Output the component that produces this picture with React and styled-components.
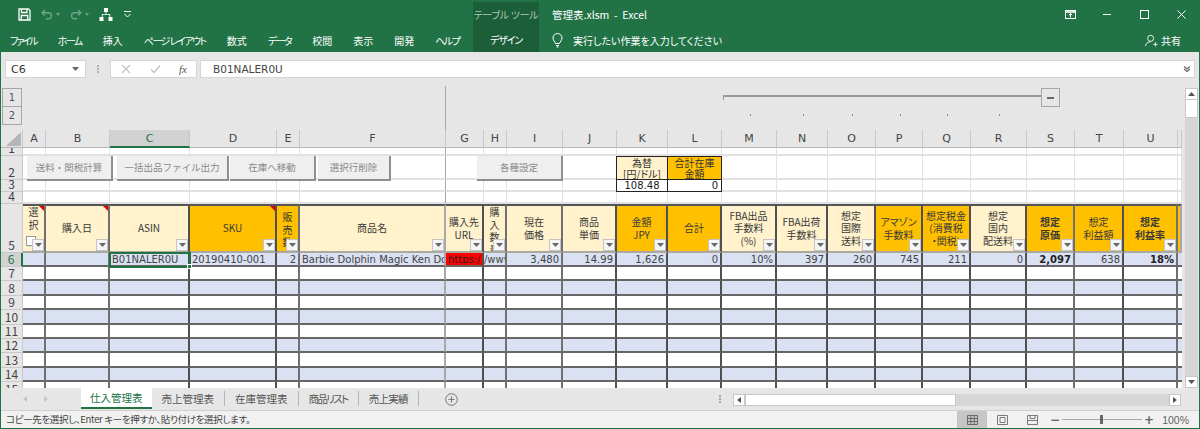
import React from 'react';
import styled, {createGlobalStyle} from 'styled-components';

const green = '#217346';
const jp = `"Noto Sans CJK JP", "Noto Sans", sans-serif`;
const cellFont = `"DejaVu Sans", "Noto Sans CJK JP", sans-serif`;
const cream = '#fff2cc';
const orange = '#ffc000';
const blue = '#d9e1f2';
const lineDark = '#505050';
const lineMid = '#707070';
const lineGrey = '#a8a8a8';
const lineLight = '#e1e1e1';

const columns = [
  {id: 'A', w: 23, line: lineMid},
  {id: 'B', w: 64, line: lineMid},
  {id: 'C', w: 80, line: lineDark},
  {id: 'D', w: 87, line: lineDark},
  {id: 'E', w: 23, line: lineMid},
  {id: 'F', w: 146, line: lineGrey},
  {id: 'G', w: 38, line: lineDark},
  {id: 'H', w: 23, line: lineMid},
  {id: 'I', w: 56, line: lineMid},
  {id: 'J', w: 54, line: lineDark},
  {id: 'K', w: 51, line: lineDark},
  {id: 'L', w: 54, line: lineDark},
  {id: 'M', w: 55, line: lineDark},
  {id: 'N', w: 51, line: lineDark},
  {id: 'O', w: 48, line: lineDark},
  {id: 'P', w: 47, line: lineDark},
  {id: 'Q', w: 48, line: lineDark},
  {id: 'R', w: 56, line: lineDark},
  {id: 'S', w: 48, line: lineMid},
  {id: 'T', w: 49, line: lineDark},
  {id: 'U', w: 54, line: lineMid},
  {id: 'V', w: 4, line: lineGrey}
];

const template = `22px ${columns.map(c => c.w + 'px').join(' ')}`;

const headers = {
  A: {lines: ['選', '択'], top: true, checkbox: true, note: true},
  B: {lines: ['購入日'], note: true},
  C: {lines: ['ASIN']},
  D: {lines: ['SKU'], orange: true, note: true},
  E: {lines: ['販', '売', '数'], orange: true, top: true, pad: 5},
  F: {lines: ['商品名']},
  G: {lines: ['購入先', 'URL']},
  H: {lines: ['購', '入', '数', '量'], top: true},
  I: {lines: ['現在', '価格']},
  J: {lines: ['商品', '単価']},
  K: {lines: ['金額', 'JPY'], orange: true},
  L: {lines: ['合計'], orange: true},
  M: {lines: ['FBA出品', '手数料', '(%)']},
  N: {lines: ['FBA出荷', '手数料']},
  O: {lines: ['想定', '国際', '送料']},
  P: {lines: ['アマゾン', '手数料'], orange: true},
  Q: {lines: ['想定税金', '(消費税', '・関税)'], orange: true},
  R: {lines: ['想定', '国内', '配送料']},
  S: {lines: ['想定', '原価'], orange: true, bold: true},
  T: {lines: ['想定', '利益額'], orange: true},
  U: {lines: ['想定', '利益率'], orange: true, bold: true},
  V: {lines: [], orange: true, noFilter: true}
};

const rowSix = {
  C: {text: 'B01NALER0U'},
  D: {text: '20190410-001'},
  E: {text: '2', right: true},
  F: {text: 'Barbie Dolphin Magic Ken Do'},
  G: {text: 'https:/', red: true},
  H: {text: '/www', flush: true},
  I: {text: '3,480', right: true},
  J: {text: '14.99', right: true},
  K: {text: '1,626', right: true},
  L: {text: '0', right: true},
  M: {text: '10%', right: true},
  N: {text: '397', right: true},
  O: {text: '260', right: true},
  P: {text: '745', right: true},
  Q: {text: '211', right: true},
  R: {text: '0', right: true},
  S: {text: '2,097', right: true, bold: true},
  T: {text: '638', right: true},
  U: {text: '18%', right: true, bold: true}
};

const menuItems = [
  {label: 'ファイル', spacing: -2},
  {label: 'ホーム', spacing: -1.5},
  {label: '挿入', spacing: 0},
  {label: 'ページ レイアウト', spacing: -1.5},
  {label: '数式', spacing: 0},
  {label: 'データ', spacing: -1.5},
  {label: '校閲', spacing: 0},
  {label: '表示', spacing: 0},
  {label: '開発', spacing: 0},
  {label: 'ヘルプ', spacing: -1.5}
];
const sheetTabs = [
  {label: '仕入管理表', spacing: 0},
  {label: '売上管理表', spacing: 0},
  {label: '在庫管理表', spacing: 0},
  {label: '商品リスト', spacing: -1.6},
  {label: '売上実績', spacing: -0.7}
];
const floatButtons = [
  {label: '送料・関税計算', left: 26, width: 86},
  {label: '一括出品ファイル出力', left: 116, width: 112},
  {label: '在庫へ移動', left: 229, width: 86},
  {label: '選択行削除', left: 317, width: 73},
  {label: '各種設定', left: 476, width: 86}
];
const outlineDots = ['M', 'N', 'O', 'P', 'Q', 'R'];

const FilterArrow = () => (
  <FilterBtn>
    <svg width="7" height="4" viewBox="0 0 7 4"><path d="M0 0h7L3.500 4z" fill="#666" /></svg>
  </FilterBtn>
);

// rows 1-4 are blank apart from the exchange rate block in K2:L3
const topCell = (row, col) => {
  if (row === 2 && col.id === 'K') return <RateCell key={col.id} $bg={cream}>為替<br />[円/ドル]</RateCell>;
  if (row === 2 && col.id === 'L') return <RateCell key={col.id} $bg={orange}>合計在庫<br />金額</RateCell>;
  if (row === 3 && col.id === 'K') return <RateValue key={col.id}>108.48</RateValue>;
  if (row === 3 && col.id === 'L') return <RateValue key={col.id} $right>0</RateValue>;
  return <BlankCell key={col.id} $freeze={col.id === 'F'} />;
};

export default function App() {
  return (
    <>
      <GlobalStyle />
      <Frame>
        <TitleBar>
          <TitleRow>
            <QuickAccess>
              <svg width="13" height="13" viewBox="0 0 13 13" fill="none" stroke="#fff" strokeWidth="1.300">
                <path d="M1 1h9.500L12 2.500V12H1z" />
                <path d="M3.500 1v3.500h5.500V1M3.300 12V7.500h6.400V12" />
              </svg>
              <Dim>
                <svg width="12" height="11" viewBox="0 0 12 11" fill="none" stroke="#fff" strokeWidth="1.400">
                  <path d="M3.800 1L1.200 3.800l2.600 2.700M1.500 3.800H7.500a3 3 0 0 1 0 6H5" />
                </svg>
                <Caret />
              </Dim>
              <Dim>
                <svg width="12" height="11" viewBox="0 0 12 11" fill="none" stroke="#fff" strokeWidth="1.400">
                  <path d="M8.200 1l2.600 2.800-2.600 2.700M10.500 3.800H4.500a3 3 0 0 0 0 6H7" />
                </svg>
                <Caret />
              </Dim>
              <svg width="14" height="13" viewBox="0 0 14 13" fill="#fff">
                <rect x="5" y="0" width="4" height="4" />
                <rect x="0.500" y="9" width="4" height="4" />
                <rect x="9.500" y="9" width="4" height="4" />
                <path d="M6.600 4h.8v2h3.800v3h-.8V6.800H3.600V9h-.8V6h3.800z" />
              </svg>
              <svg width="9" height="7" viewBox="0 0 9 7" fill="none" stroke="#fff">
                <path d="M1 .5h7" />
                <path d="M1.500 3l3 3 3-3" />
              </svg>
            </QuickAccess>
            <ToolGroupLabel>テーブル ツール</ToolGroupLabel>
            <DocTitle>管理表.xlsm&nbsp; -&nbsp; Excel</DocTitle>
            <WindowButtons>
              <svg width="11" height="9" viewBox="0 0 11 9" fill="none" stroke="#fff">
                <rect x=".5" y=".5" width="10" height="8" />
                <path d="M.5 2h10" strokeWidth="1.600" />
                <path d="M5.500 7.500V3.500M3.800 5.200l1.700-1.700 1.700 1.700" />
              </svg>
              <svg width="11" height="11" viewBox="0 0 11 11" stroke="#fff"><path d="M1 5.500h8" /></svg>
              <svg width="11" height="11" viewBox="0 0 11 11" fill="none" stroke="#fff"><rect x="1.500" y="1.500" width="8" height="8" /></svg>
              <svg width="11" height="11" viewBox="0 0 11 11" fill="none" stroke="#fff"><path d="M1.500 1.500l8 8M9.500 1.500l-8 8" /></svg>
            </WindowButtons>
          </TitleRow>
          <MenuRow>
            <Menu>
              {menuItems.map(item => <MenuItem key={item.label} $spacing={item.spacing}>{item.label}</MenuItem>)}
            </Menu>
            <DesignTab>デザイン</DesignTab>
            <TellMe>
              <svg width="11" height="15" viewBox="0 0 11 15" fill="none" stroke="#fff">
                <path d="M3.500 10.500C3 8.500 1 7.500 1 5a4.500 4.500 0 0 1 9 0c0 2.500-2 3.500-2.500 5.500zM4 12.500h3M4.500 14h2" />
              </svg>
              <span>実行したい作業を入力してください</span>
            </TellMe>
            <Share>
              <svg width="13" height="13" viewBox="0 0 15 14" fill="none" stroke="#fff">
                <circle cx="6.500" cy="4.500" r="3.500" />
                <path d="M.5 13.500c.5-3 2.500-5 6-5M9.500 11.500h5M12 9v5" />
              </svg>
              <span>共有</span>
            </Share>
          </MenuRow>
        </TitleBar>

        <FormulaBar>
          <NameBox>
            C6
            <svg width="7" height="4" viewBox="0 0 7 4"><path d="M0 0h7L3.500 4z" fill="#666" /></svg>
          </NameBox>
          <GripDots />
          <FormulaButtons>
            <svg width="10" height="10" viewBox="0 0 10 10" fill="none" stroke="#c4c4c4" strokeWidth="1.300"><path d="M1 1l8 8M9 1l-8 8" /></svg>
            <svg width="11" height="10" viewBox="0 0 11 10" fill="none" stroke="#c4c4c4" strokeWidth="1.500"><path d="M1 5.500l3 3 6-7" /></svg>
            <FxLabel>fx</FxLabel>
          </FormulaButtons>
          <FormulaInput>
            <span>B01NALER0U</span>
            <svg width="8" height="6" viewBox="0 0 8 6" fill="none" stroke="#666" strokeWidth="1.200"><path d="M1 .5l3 2.500 3-2.500M1 3l3 2.500L7 3" /></svg>
          </FormulaInput>
        </FormulaBar>

        <Workspace>
          <Sheet>
            <OutlineRow>
              <LevelButtons>
                <LevelBtn>1</LevelBtn>
                <LevelBtn>2</LevelBtn>
              </LevelButtons>
              {columns.map(col => (
                <OutlineCell key={col.id} $freeze={col.id === 'F'}>
                  {outlineDots.includes(col.id) && <OutlineDot />}
                </OutlineCell>
              ))}
              <OutlineBracket>
                <OutlineToggle />
              </OutlineBracket>
            </OutlineRow>

            <Grid $h={18}>
              <Corner>
                <svg width="15" height="14" viewBox="0 0 15 14"><path d="M15 0v14H0z" fill="#b5b5b5" /></svg>
              </Corner>
              {columns.map(col => (
                <ColHead key={col.id} $active={col.id === 'C'}>{col.w > 10 ? col.id : ''}</ColHead>
              ))}
            </Grid>

            <Body>
              {[[1, 8], [2, 24], [3, 12], [4, 12]].map(([row, h]) => (
                <Grid key={row} $h={h}>
                  <RowHead>{row}</RowHead>
                  {columns.map(col => topCell(row, col))}
                </Grid>
              ))}

              <Grid $h={49}>
                <RowHead>5</RowHead>
                {columns.map(col => {
                  const head = headers[col.id];
                  return (
                    <HeadCell key={col.id} $orange={head.orange} $line={col.line} $top={head.top}>
                      {head.note && <NoteMark />}
                      <HeadText $bold={head.bold} $pad={head.pad}>
                        {head.lines.map(line => <div key={line}>{line}</div>)}
                      </HeadText>
                      {head.checkbox && <CheckBox />}
                      {!head.noFilter && <FilterArrow />}
                    </HeadCell>
                  );
                })}
              </Grid>

              {[6, 7, 8, 9, 10, 11, 12, 13, 14, 15].map(row => (
                <Grid key={row} $h={row === 6 ? 14 : 14.4}>
                  <RowHead $active={row === 6}>{row}</RowHead>
                  {columns.map(col => {
                    const data = row === 6 ? rowSix[col.id] : null;
                    return (
                      <DataCell
                        key={col.id}
                        $line={col.line}
                        $striped={row % 2 === 0}
                        $red={data && data.red}
                        $right={data && data.right}
                        $bold={data && data.bold}
                        $flush={data && data.flush}
                      >
                        {data && data.text}
                      </DataCell>
                    );
                  })}
                </Grid>
              ))}

              <Selection />

              {floatButtons.map(btn => (
                <FloatButton key={btn.label} $left={btn.left} $width={btn.width}>{btn.label}</FloatButton>
              ))}
            </Body>
          </Sheet>

          <VScroll>
            <ScrollBtn>
              <svg width="7" height="4" viewBox="0 0 7 4"><path d="M3.500 0L7 4H0z" fill="#555" /></svg>
            </ScrollBtn>
            <ScrollThumb />
            <ScrollTrack />
            <ScrollBtn>
              <svg width="7" height="4" viewBox="0 0 7 4"><path d="M0 0h7L3.500 4z" fill="#555" /></svg>
            </ScrollBtn>
          </VScroll>
        </Workspace>

        <TabBar>
          <TabNav>
            <svg width="4" height="6" viewBox="0 0 4 6"><path d="M4 0v6L0 3z" fill="#c4c4c4" /></svg>
            <svg width="4" height="6" viewBox="0 0 4 6"><path d="M0 0v6l4-3z" fill="#c4c4c4" /></svg>
          </TabNav>
          <Tabs>
            {sheetTabs.map((tab, i) => (
              <SheetTab key={tab.label} $active={i === 0} $spacing={tab.spacing}>{tab.label}</SheetTab>
            ))}
          </Tabs>
          <AddSheet>
            <svg width="13" height="13" viewBox="0 0 13 13" fill="none" stroke="#777">
              <circle cx="6.500" cy="6.500" r="5.800" />
              <path d="M6.500 3.500v6M3.500 6.500h6" />
            </svg>
          </AddSheet>
          <TabGrip />
          <HScroll>
            <HScrollBtn>
              <svg width="4" height="6" viewBox="0 0 4 6"><path d="M4 0v6L0 3z" fill="#555" /></svg>
            </HScrollBtn>
            <HScrollThumb />
            <HScrollTrack />
            <HScrollBtn>
              <svg width="4" height="6" viewBox="0 0 4 6"><path d="M0 0v6l4-3z" fill="#555" /></svg>
            </HScrollBtn>
          </HScroll>
        </TabBar>

        <StatusBar>
          <StatusText>コピー先を選択し、Enter キーを押すか、貼り付けを選択します。</StatusText>
          <ViewButton $active>
            <svg width="11" height="10" viewBox="0 0 11 10" fill="none" stroke="#6a6a6a">
              <path d="M.5.500h10v9H.5zM.5 3.500h10M.5 6.500h10M3.800.500v9M7.200.500v9" />
            </svg>
          </ViewButton>
          <ViewButton>
            <svg width="11" height="10" viewBox="0 0 11 10" fill="none" stroke="#7a7a7a">
              <path d="M.5.500h10v9H.5zM3 2.500h5v5H3z" />
            </svg>
          </ViewButton>
          <ViewButton>
            <svg width="11" height="10" viewBox="0 0 11 10" fill="none" stroke="#7a7a7a">
              <path d="M.5.500h10v9H.5zM.5 5.500h10M3 .500v3h5v-3" />
            </svg>
          </ViewButton>
          <ZoomControl>
            <ZoomSign>−</ZoomSign>
            <ZoomSlider><ZoomThumb /></ZoomSlider>
            <ZoomSign>+</ZoomSign>
            <ZoomValue>100%</ZoomValue>
          </ZoomControl>
        </StatusBar>
      </Frame>
    </>
  );
}

const GlobalStyle = createGlobalStyle`
  html, body {
    margin: 0;
    padding: 0;
    background: #e6e6e6;
  }
`;

const Frame = styled.div`
  box-sizing: border-box;
  width: 1200px;
  height: 429px;
  display: flex;
  flex-direction: column;
  overflow: hidden;
  border-left: 1px solid ${green};
  border-right: 1px solid ${green};
  border-bottom: 1px solid ${green};
  font-family: ${jp};
  background: #e6e6e6;
`;

const TitleBar = styled.div`
  height: 52px;
  flex: none;
  background: ${green};
  color: #fff;
  font-size: 10px;
`;

const TitleRow = styled.div`
  height: 28px;
  display: flex;
  align-items: center;
`;

const QuickAccess = styled.div`
  display: flex;
  align-items: center;
  width: 472px;
  box-sizing: border-box;
  padding-left: 17px;
  gap: 10px;
`;

const Dim = styled.div`
  display: flex;
  align-items: center;
  gap: 3px;
  opacity: 0.35;
`;

const Caret = styled.span`
  border-top: 3px solid #fff;
  border-left: 2px solid transparent;
  border-right: 2px solid transparent;
`;

const ToolGroupLabel = styled.div`
  width: 66px;
  height: 26px;
  margin-top: 2px;
  background: #1c5e38;
  color: #a9c9b6;
  font-size: 10px;
  letter-spacing: -0.3px;
  line-height: 26px;
  text-align: center;
  white-space: nowrap;
  font-feature-settings: "palt";
`;

const DocTitle = styled.div`
  margin-left: 13px;
  font-size: 10.500px;
  white-space: nowrap;
`;

const WindowButtons = styled.div`
  margin-left: auto;
  margin-right: 12px;
  display: flex;
  align-items: center;
  gap: 26px;
`;

const MenuRow = styled.div`
  height: 24px;
  display: flex;
  align-items: center;
`;

const Menu = styled.div`
  width: 472px;
  box-sizing: border-box;
  padding-left: 9px;
  display: flex;
  gap: 21px;
  font-feature-settings: "palt";
`;

const MenuItem = styled.div`
  white-space: nowrap;
  font-size: 10px;
  letter-spacing: ${({$spacing}) => $spacing}px;
`;

const DesignTab = styled.div`
  width: 66px;
  height: 24px;
  line-height: 24px;
  text-align: center;
  background: #1c5e38;
  font-size: 10px;
  letter-spacing: -1.200px;
  font-feature-settings: "palt";
`;

const TellMe = styled.div`
  margin-left: 13px;
  display: flex;
  align-items: center;
  gap: 10px;
  font-size: 10px;
  font-feature-settings: "palt";
`;

const Share = styled.div`
  margin-left: auto;
  margin-right: 18px;
  display: flex;
  align-items: center;
  gap: 3px;
  font-size: 10px;
`;

const FormulaBar = styled.div`
  height: 34px;
  flex: none;
  box-sizing: border-box;
  padding: 8px 4px 8px 4px;
  display: flex;
  align-items: stretch;
  background: #e6e6e6;
`;

const NameBox = styled.div`
  width: 81px;
  box-sizing: border-box;
  background: #fff;
  border: 1px solid #d6d6d6;
  padding: 0 6px 0 5px;
  display: flex;
  align-items: center;
  justify-content: space-between;
  font: 11px ${cellFont};
  color: #333;
`;

const GripDots = styled.div`
  width: 24px;
  position: relative;
  &::after {
    content: '';
    position: absolute;
    left: 11px;
    top: 5px;
    width: 2px;
    height: 8px;
    background: repeating-linear-gradient(#b0b0b0 0 2px, transparent 2px 3px);
  }
`;

const FormulaButtons = styled.div`
  width: 87px;
  box-sizing: border-box;
  background: #fff;
  border: 1px solid #d6d6d6;
  padding: 0 9px 0 10px;
  display: flex;
  align-items: center;
  justify-content: space-between;
  margin-right: 3px;
`;

const FxLabel = styled.span`
  font: italic 11px "Liberation Serif", serif;
  color: #555;
`;

const FormulaInput = styled.div`
  flex: 1;
  box-sizing: border-box;
  background: #fff;
  border: 1px solid #d6d6d6;
  padding: 0 3px 0 12px;
  display: flex;
  align-items: center;
  justify-content: space-between;
  font: 10.500px ${cellFont};
  color: #444;
`;

const Workspace = styled.div`
  height: 302px;
  flex: none;
  display: flex;
`;

const Sheet = styled.div`
  width: 1181px;
  flex: none;
`;

const OutlineRow = styled.div`
  position: relative;
  height: 44px;
  display: grid;
  grid-template-columns: ${template};
`;

const LevelButtons = styled.div`
  padding: 2px 0 0 1px;
`;

const LevelBtn = styled.div`
  box-sizing: border-box;
  width: 20px;
  height: 19px;
  border: 1px solid #a6a6a6;
  margin-bottom: -1px;
  font: 10px ${cellFont};
  color: #555;
  display: flex;
  align-items: center;
  justify-content: center;
`;

const OutlineCell = styled.div`
  position: relative;
  ${({$freeze}) => $freeze && 'border-right: 1px solid #a8a8a8;'}
`;

const OutlineDot = styled.span`
  position: absolute;
  left: 50%;
  top: 28px;
  width: 1px;
  height: 2px;
  background: #8e8e8e;
`;

const OutlineBracket = styled.div`
  position: absolute;
  left: 722px;
  top: 9px;
  width: 318px;
  height: 5px;
  box-sizing: border-box;
  border-top: 2px solid #9a9a9a;
  border-left: 1px solid #9a9a9a;
`;

const OutlineToggle = styled.div`
  position: absolute;
  left: 317px;
  top: -9px;
  width: 19px;
  height: 19px;
  box-sizing: border-box;
  background: #e6e6e6;
  border: 1px solid #a6a6a6;
  &::after {
    content: '';
    position: absolute;
    left: 5px;
    top: 8px;
    width: 7px;
    height: 2px;
    background: #666;
  }
`;

const Grid = styled.div`
  height: ${({$h}) => $h}px;
  display: grid;
  grid-template-columns: ${template};
  grid-template-rows: ${({$h}) => $h}px;
`;

const Corner = styled.div`
  background: #e6e6e6;
  border-right: 1px solid #c8c8c8;
  border-bottom: 1px solid #b5b5b5;
  box-sizing: border-box;
  display: flex;
  justify-content: flex-end;
  align-items: flex-end;
  padding: 0 1px 1px 0;
`;

const ColHead = styled.div`
  box-sizing: border-box;
  background: ${({$active}) => ($active ? '#d2d2d2' : '#e6e6e6')};
  color: ${({$active}) => ($active ? green : '#444')};
  border-right: 1px solid #c8c8c8;
  border-bottom: ${({$active}) => ($active ? `2px solid ${green}` : '1px solid #b5b5b5')};
  font: 11px/17px ${cellFont};
  text-align: center;
`;

const Body = styled.div`
  position: relative;
  height: 240px;
  overflow: hidden;
`;

const RowHead = styled.div`
  box-sizing: border-box;
  background: ${({$active}) => ($active ? '#d2d2d2' : '#e6e6e6')};
  color: ${({$active}) => ($active ? green : '#444')};
  border-right: ${({$active}) => ($active ? `2px solid ${green}` : '1px solid #c8c8c8')};
  border-bottom: 1px solid #c8c8c8;
  font: 12px/12px ${jp};
  display: flex;
  align-items: flex-end;
  justify-content: center;
  padding-bottom: 1px;
  overflow: hidden;
`;

const BlankCell = styled.div`
  box-sizing: border-box;
  background: #fff;
  border-right: 1px solid ${({$freeze}) => ($freeze ? '#a8a8a8' : lineLight)};
  border-bottom: 2px solid ${lineLight};
`;

const RateCell = styled.div`
  box-sizing: border-box;
  background: ${({$bg}) => $bg};
  border: 1px solid #222;
  margin-left: -1px;
  width: calc(100% + 1px);
  font: 10px/11px ${jp};
  font-feature-settings: "palt";
  color: #333;
  text-align: center;
  white-space: nowrap;
  overflow: hidden;
`;

const RateValue = styled.div`
  box-sizing: border-box;
  background: #fff;
  border: 1px solid #222;
  border-top: none;
  margin-left: -1px;
  width: calc(100% + 1px);
  font: 10px/11px ${cellFont};
  color: #222;
  text-align: ${({$right}) => ($right ? 'right' : 'center')};
  padding: 0 3px;
`;

const HeadCell = styled.div`
  position: relative;
  box-sizing: border-box;
  background: ${({$orange}) => ($orange ? orange : cream)};
  border-top: 2px solid #555;
  border-bottom: 2px solid #aaa9a0;
  border-right: 2px solid ${({$line}) => $line};
  display: flex;
  justify-content: center;
  align-items: ${({$top}) => ($top ? 'flex-start' : 'center')};
  overflow: hidden;
`;

const HeadText = styled.div`
  font: ${({$bold}) => ($bold ? 700 : 400)} 10px/12.500px ${jp};
  font-feature-settings: "palt";
  color: #3a3a3a;
  text-align: center;
  white-space: nowrap;
  padding-top: ${({$pad}) => $pad || 0}px;
`;

const NoteMark = styled.span`
  position: absolute;
  top: 0;
  right: 0;
  border-top: 5px solid #e00000;
  border-left: 5px solid transparent;
`;

const CheckBox = styled.span`
  position: absolute;
  left: 3px;
  bottom: 5px;
  width: 8px;
  height: 8px;
  background: #fff;
  border: 1px solid #999;
  box-shadow: 1px 1px 0 #e0e0e0;
`;

const FilterBtn = styled.span`
  position: absolute;
  right: 0;
  bottom: 0;
  width: 12px;
  height: 12px;
  box-sizing: border-box;
  background: #f6f6f6;
  border: 1px solid #c4c4c4;
  display: flex;
  align-items: center;
  justify-content: center;
`;

const DataCell = styled.div`
  box-sizing: border-box;
  background: ${({$red, $striped}) => ($red ? '#ff0000' : $striped ? blue : '#fff')};
  border-right: 2px solid ${({$line}) => $line};
  border-bottom: 2px solid #666;
  font: ${({$bold}) => ($bold ? 700 : 400)} 10px/13px ${cellFont};
  color: ${({$bold, $red}) => ($bold || $red ? '#222' : '#444')};
  text-align: ${({$right}) => ($right ? 'right' : 'left')};
  padding: 0 2px;
  padding-left: ${({$flush}) => ($flush ? 0 : '2px')};
  white-space: nowrap;
  overflow: hidden;
`;

// selected cell C6, over the data rows
const Selection = styled.div`
  position: absolute;
  left: 108px;
  top: 104px;
  width: 82px;
  height: 16px;
  box-sizing: border-box;
  border: 2px solid ${green};
  &::after {
    content: '';
    position: absolute;
    right: -3px;
    bottom: -3px;
    width: 5px;
    height: 5px;
    background: ${green};
    border: 1px solid #fff;
    box-sizing: border-box;
  }
`;

const FloatButton = styled.div`
  position: absolute;
  top: 8px;
  left: ${({$left}) => $left}px;
  width: ${({$width}) => $width}px;
  height: 25px;
  box-sizing: border-box;
  background: #efefef;
  border-right: 2px solid #8f8f8f;
  border-bottom: 2px solid #8f8f8f;
  color: #8a8a8a;
  font: 9.500px/23px ${jp};
  text-align: center;
  white-space: nowrap;
`;

const VScroll = styled.div`
  flex: 1;
  box-sizing: border-box;
  padding: 2px 1px 0 3px;
  display: flex;
  flex-direction: column;
`;

const ScrollBtn = styled.div`
  height: 12px;
  flex: none;
  box-sizing: border-box;
  background: #fff;
  border: 1px solid #c8c8c8;
  display: flex;
  align-items: center;
  justify-content: center;
`;

const ScrollThumb = styled.div`
  height: 18px;
  flex: none;
  box-sizing: border-box;
  background: #fff;
  border: 1px solid #c8c8c8;
  border-top: none;
`;

const ScrollTrack = styled.div`
  flex: 1;
  background: #d6d6d6;
`;

const TabBar = styled.div`
  height: 23px;
  flex: none;
  display: flex;
  align-items: flex-start;
  background: #e6e6e6;
  border-bottom: 1px solid #d0d0d0;
  box-sizing: border-box;
`;

const TabNav = styled.div`
  width: 80px;
  flex: none;
  height: 22px;
  box-sizing: border-box;
  padding: 0 33px 0 22px;
  display: flex;
  align-items: center;
  justify-content: space-between;
`;

const Tabs = styled.div`
  display: flex;
`;

const SheetTab = styled.div`
  box-sizing: border-box;
  background: ${({$active}) => ($active ? '#fff' : 'transparent')};
  color: ${({$active}) => ($active ? green : '#555')};
  border-bottom: ${({$active}) => ($active ? `2px solid ${green}` : 'none')};
  border-right: ${({$active}) => ($active ? 'none' : '1px solid #b5b5b5')};
  margin-top: ${({$active}) => ($active ? 0 : '3px')};
  height: ${({$active}) => ($active ? '21px' : '15px')};
  padding: ${({$active}) => ($active ? '0 9px' : '0 10px')};
  font-size: 10.500px;
  letter-spacing: ${({$spacing}) => $spacing}px;
  line-height: ${({$active}) => ($active ? '20px' : '15px')};
  font-feature-settings: "palt";
  white-space: nowrap;
`;

const AddSheet = styled.div`
  margin-left: 26px;
  height: 22px;
  display: flex;
  align-items: center;
`;

const TabGrip = styled.div`
  width: 2px;
  height: 8px;
  margin: 7px 0 0 261px;
  background: repeating-linear-gradient(#a8a8a8 0 2px, transparent 2px 3px);
`;

const HScroll = styled.div`
  margin: 6px 0 0 12px;
  width: 448px;
  height: 12px;
  display: flex;
`;

const HScrollBtn = styled.div`
  width: 12px;
  flex: none;
  box-sizing: border-box;
  background: #fff;
  border: 1px solid #c8c8c8;
  display: flex;
  align-items: center;
  justify-content: center;
`;

const HScrollThumb = styled.div`
  width: 211px;
  flex: none;
  box-sizing: border-box;
  background: #fff;
  border: 1px solid #c8c8c8;
`;

const HScrollTrack = styled.div`
  flex: 1;
  background: #d6d6d6;
`;

const StatusBar = styled.div`
  flex: 1;
  display: flex;
  align-items: stretch;
  background: #f1f1f1;
  font-size: 9.500px;
  color: #444;
`;

const StatusText = styled.div`
  width: 956px;
  flex: none;
  box-sizing: border-box;
  padding-left: 5px;
  line-height: 17px;
  letter-spacing: -0.330px;
  white-space: nowrap;
  font-feature-settings: "palt";
`;

const ViewButton = styled.div`
  width: 30px;
  flex: none;
  background: ${({$active}) => ($active ? '#c6c6c6' : 'transparent')};
  display: flex;
  align-items: center;
  justify-content: center;
`;

const ZoomControl = styled.div`
  margin-left: 3px;
  display: flex;
  align-items: center;
  gap: 2px;
  font: 10px ${cellFont};
  color: #666;
`;

const ZoomSign = styled.span`
  font-size: 12px;
  font-weight: 700;
`;

const ZoomSlider = styled.div`
  position: relative;
  width: 80px;
  height: 1px;
  background: #a8a8a8;
`;

const ZoomThumb = styled.span`
  position: absolute;
  left: 38px;
  top: -4px;
  width: 3px;
  height: 9px;
  background: #666;
`;

const ZoomValue = styled.span`
  margin-left: 6px;
  font-family: "Liberation Sans", sans-serif;
  font-size: 10.500px;
`;
